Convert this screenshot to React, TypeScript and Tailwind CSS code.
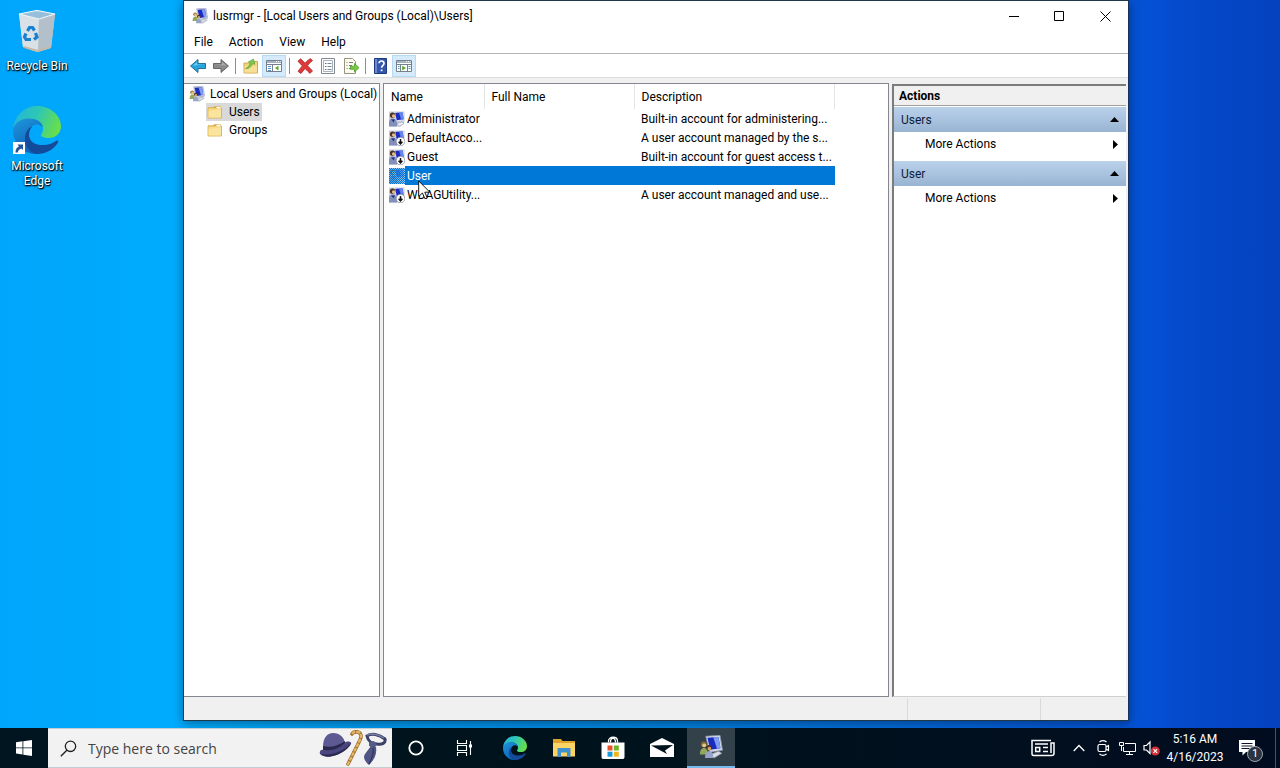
import React, { useState } from 'react';

const users = [
  { name: 'Administrator', fullName: '', description: 'Built-in account for administering...', disabled: false },
  { name: 'DefaultAcco...', fullName: '', description: 'A user account managed by the s...', disabled: true },
  { name: 'Guest', fullName: '', description: 'Built-in account for guest access t...', disabled: true },
  { name: 'User', fullName: '', description: '', disabled: false },
  { name: 'WDAGUtility...', fullName: '', description: 'A user account managed and use...', disabled: true },
];

const menus = ['File', 'Action', 'View', 'Help'];

/* ---------- small icons ---------- */

const UsersPcIcon = ({ className = 'w-4 h-4' }: { className?: string }) => (
  <svg viewBox="0 0 16 16" className={className}>
    <path d="M4.500.8l9.500-.6 1.700 10-8.700 1.300z" fill="#d3d8e8" stroke="#8a90a8" strokeWidth=".5" />
    <path d="M5.600 1.800l7.400-.5 1.300 7.600-6.800 1z" fill="#1a2cc0" />
    <path d="M9.500 1.500l3.500-.2 1.300 7.600-2.300.3z" fill="#7f9cf2" />
    <path d="M7.500 13l5.500-2.200 2.200 1.400-5.200 3.200z" fill="#d7dce6" stroke="#8b93a5" strokeWidth=".5" />
    <circle cx="3.200" cy="6.300" r="1.900" fill="#8a6a34" />
    <circle cx="3.500" cy="6.900" r="1.300" fill="#eac68c" />
    <path d="M.6 13c0-3 1.200-4.400 2.700-4.400S6 10 6 13z" fill="#93a85c" />
    <circle cx="6.700" cy="8.500" r="1.800" fill="#4b3420" />
    <circle cx="6.900" cy="9.100" r="1.200" fill="#d9a566" />
    <path d="M4 15.300c0-3 1.200-4.400 2.800-4.400s2.700 1.400 2.700 4.400z" fill="#97a4c8" />
  </svg>
);

const UserIcon = ({ disabled, selected }: { disabled?: boolean; selected?: boolean }) => (
  <svg viewBox="0 0 16 16" className="w-4 h-4">
    <defs>
      <pattern id="dither" width="2" height="2" patternUnits="userSpaceOnUse">
        <path d="M0 0h1v1H0zM1 1h1v1H1z" fill="#0078d7" />
      </pattern>
    </defs>
    <path d="M0 .5h15.500V11l-4 4.500H0z" fill="#c9ccdc" />
    <path d="M5.500 1l9-.4 1 8.700-8 1z" fill="#e1e4f0" />
    <path d="M6.300 1.800l7.500-.4.8 6.900-6.900.9z" fill="#1a2dc0" />
    <path d="M10 1.600l3.800-.2.8 6.900-2.600.3z" fill="#6484ec" />
    <circle cx="3.600" cy="4.200" r="2.700" fill="#4a3222" />
    <circle cx="4.600" cy="5" r="1.700" fill="#e6bc8c" />
    <path d="M0 15.500V11c0-2 1.700-3.500 3.700-3.500S8 9 8 12v3.500z" fill="#8290bb" />
    <path d="M2 8.500l2.800 3 1-3.200z" fill="#26367c" />
    <path d="M8 12.200l5-1.200 2 1.500-5 3z" fill="#eef0f5" stroke="#8088a0" strokeWidth=".5" />
    {disabled && (
      <g>
        <circle cx="11.500" cy="11.500" r="4.300" fill="#fff" stroke="#6d7488" strokeWidth=".6" />
        <path d="M11.500 9v4.600M9.600 11.800l1.900 2 1.900-2" fill="none" stroke="#111" strokeWidth="1.500" />
      </g>
    )}
    {selected && (
      <g>
        <rect width="16" height="16" fill="#4fa3e6" opacity=".55" />
        <rect width="16" height="16" fill="url(#dither)" />
      </g>
    )}
  </svg>
);

const FolderIcon = () => (
  <svg viewBox="0 0 16 16" className="w-4 h-4">
    <path d="M1 3.500h5l1.200-1.300h6.600V5H1z" fill="#dca842" />
    <path d="M1 4h13.500v10H1z" fill="#f8dc88" stroke="#d9ab4b" strokeWidth=".8" />
    <path d="M9.500 2.800h4v1.600h-4z" fill="#fff" />
    <path d="M1.600 7l12.400-1.500v8H1.600z" fill="#fbe49d" />
  </svg>
);

const ArrowIcon = ({ right }: { right?: boolean }) =>
  right ? (
    <svg viewBox="0 0 16 16" className="w-4 h-4">
      <path d="M.5 5.500H8v-4l7.500 6.500L8 14.500v-4H.5z" fill="#8b8b8b" stroke="#5c5c5c" strokeWidth=".9" />
      <path d="M1.500 6.500H9V4l4 3.500z" fill="#adadad" />
    </svg>
  ) : (
    <svg viewBox="0 0 16 16" className="w-4 h-4">
      <path d="M15.500 5.500H8v-4L.5 8 8 14.500v-4h7.500z" fill="#27a5dc" stroke="#17668f" strokeWidth=".9" />
      <path d="M14.500 6.500H7V4L3 7.500z" fill="#6fd0f3" />
    </svg>
  );

const UpFolderIcon = () => (
  <svg viewBox="0 0 16 16" className="w-4 h-4">
    <path d="M1 5h6l1-1.500h6.500V15H1z" fill="#f3d57c" stroke="#c9a349" strokeWidth=".9" />
    <path d="M1.500 8h12.500v6.500H1.500z" fill="#f7df95" />
    <path d="M2.500 10.500C5 9.500 6.500 7.500 7.500 4.800L5.300 4 10.500 1l1.300 5.300-2-.7C8.500 8.500 6 11 2.500 10.500z" fill="#7fc94e" stroke="#4f9a2c" strokeWidth=".6" />
  </svg>
);

const PaneIcon = ({ side }: { side: 'left' | 'right' }) => (
  <svg viewBox="0 0 16 16" className="w-4 h-4">
    <path d="M.5 2.500h15v11H.5z" fill="#fff" stroke="#75808c" />
    <path d="M1 3h14v2H1z" fill="#a3b3c2" />
    <path d="M10 3.500h1M12 3.500h1M14 3.500h.6" stroke="#fff" />
    <path d="M1 6.500h14" stroke="#75808c" />
    {side === 'left' ? (
      <g>
        <path d="M6.500 7v6.500" stroke="#75808c" />
        <path d="M2 8.500h3M2 10.500h3M2 12.500h3" stroke="#5a91c6" />
        <path d="M12.500 7.800v4.600L9 10.100z" fill="#55a630" />
      </g>
    ) : (
      <g>
        <path d="M4.500 7v6.500M11.500 7v6.500" stroke="#75808c" />
        <path d="M2 8.500h1.500M2 10.500h1.500M12.500 8.500h2M12.500 10.500h2" stroke="#5a91c6" />
        <path d="M6.200 7.800v4.600L10 10.100z" fill="#55a630" />
      </g>
    )}
  </svg>
);

const DeleteIcon = () => (
  <svg viewBox="0 0 16 16" className="w-4 h-4">
    <path d="M1 3.200L3.500.8C5 2 6.600 3.600 8 5.200 9.600 3.400 11.500 1.600 13.500.6l2 2c-2 1.400-3.700 3.300-5 5.100 1.700 1.700 3.500 3.500 5 5.200L13 15.400c-1.600-1.400-3.400-3.200-5-4.900-1.300 1.600-2.700 3.400-4 5L1 13.400c1.200-1.800 2.700-3.800 4.300-5.500C3.800 6.300 2.200 4.600 1 3.200z" fill="#e0393a" stroke="#a51d1f" strokeWidth=".7" />
  </svg>
);

const PropertiesIcon = () => (
  <svg viewBox="0 0 16 16" className="w-4 h-4">
    <path d="M1.500.5h13v15h-13z" fill="#fbfbfb" stroke="#828b94" />
    <path d="M3.500 2.500h9v11h-9z" fill="#fff" stroke="#a9b2bb" />
    <path d="M5 5.500h1.500M5 8.500h1.500M5 11.500h1.500" stroke="#3d7ab8" />
    <path d="M7.500 5.500h4M7.500 8.500h4M7.500 11.500h4" stroke="#7b8792" />
  </svg>
);

const ExportIcon = () => (
  <svg viewBox="0 0 16 16" className="w-4 h-4">
    <path d="M1.500.5h8l3 3v12h-11z" fill="#fdfbee" stroke="#97937d" />
    <path d="M3.500 4.500h1M3.500 7.500h1M3.500 10.500h1M6 4.500h4M6 7.500h3M6 10.500h2" stroke="#77808c" />
    <path d="M7.500 8.200h4V5.500L16 9.700l-4.500 4.300v-2.700h-4z" fill="#78cc3f" stroke="#3f9423" strokeWidth=".7" />
  </svg>
);

const HelpIcon = () => (
  <svg viewBox="0 0 16 16" className="w-4 h-4">
    <path d="M1.500.5h12v15h-12z" fill="#3457ad" stroke="#20397c" />
    <path d="M2 1h2v14H2z" fill="#6c8bd2" />
    <path d="M6 5.300c0-3 5-3 5 .2 0 2-2.400 1.800-2.400 4.300" fill="none" stroke="#fff" strokeWidth="1.600" />
    <path d="M7.700 11.500h1.800v1.700H7.700z" fill="#fff" />
  </svg>
);

const EdgeIcon = ({ className, id }: { className: string; id: string }) => (
  <svg viewBox="0 0 48 48" className={className}>
    <defs>
      <linearGradient id={id + 'a'} x1="0" y1=".3" x2="1" y2=".6">
        <stop offset="0" stopColor="#22b5dc" />
        <stop offset=".45" stopColor="#2ec7b4" />
        <stop offset="1" stopColor="#6be044" />
      </linearGradient>
      <linearGradient id={id + 'b'} x1="0" y1="0" x2=".5" y2="1">
        <stop offset="0" stopColor="#1f97dc" />
        <stop offset="1" stopColor="#0c62b8" />
      </linearGradient>
    </defs>
    <path d="M0 24C1 10 11 0 24 0c14 0 24 10 24 20 0 8-6 12-12 12-5 0-8-1-8-3 0-1 2-3 2-6 0-6-6-10-13-10C9 13 2 17 0 24z" fill={`url(#${id}a)`} />
    <path d="M0 24c1-7 8-11.500 16-11.500 7 0 13 3 14 9-3-3.500-8-4-11-1-6 6-4 19 8 26-2 1-3 1.500-5 1.500C9 47 0 37 0 24z" fill={`url(#${id}b)`} />
    <path d="M19 20.500c-6 8-3 19 11 18.500 6 0 10-2 13-4 1.500-1 3 0 2 1.500C40 44 33 48 24 48c-9-2-13-10-12-17 .6-5 3-9 7-10.500z" fill="#134a99" />
  </svg>
);

const RecycleBinIcon = () => (
  <svg viewBox="0 0 40 44" className="w-10 h-11">
    <path d="M2 4l20 5 16-5-4 34-14 4L6 37z" fill="#cfd6db" />
    <path d="M2 4l20 5-1 33L6 37z" fill="#d9e1e7" />
    <path d="M22 9l16-5-4 34-13 4z" fill="#b3bfc9" />
    <path d="M7 36l14 4 12-4v2l-12 4-14-4z" fill="#c9b6a5" />
    <path d="M2 4L20 .5 38 4 22 9z" fill="#97bfdc" stroke="#f1f5f8" strokeWidth="1.200" />
    <g fill="none" stroke="#1780d0" strokeWidth="3.200">
      <path d="M10.500 21l2-3.500h3l2 3" />
      <path d="M18.500 23l1.500 4-3 2.500" />
      <path d="M14 29.500H9L7.500 27l1.500-3.500" />
    </g>
  </svg>
);

const BowlerHatArt = () => (
  <svg viewBox="0 0 68 38" className="w-[68px] h-[38px]">
    <g fill="none" strokeLinecap="round">
      <path d="M29 35L41 11c2-4 1-7-2-8-3-.5-5 0-6 2" stroke="#9b6a2c" strokeWidth="3.600" />
      <path d="M29 35L41 11c2-4 1-7-2-8-3-.5-5 0-6 2" stroke="#e2b565" strokeWidth="2.400" strokeDasharray="2 3" />
    </g>
    <path d="M4 18C4 9 8 4 14 4c7 0 11 4 12 11l-22 8z" fill="#5d5992" />
    <path d="M4 17c7 2 15 0 22-5l1 5c-7 5-15 7-23 5z" fill="#29274d" />
    <path d="M1 25c-1-4 2-5 5-4 8 1 15-2 21-8 3-1 6 0 5 2-5 9-24 17-31 10z" fill="#4a4680" />
    <path d="M2 25c10 2 22-2 30-11-4 10-23 18-30 11z" fill="#2b294f" />
    {/* necktie: a loop round the collar, knot and a tail */}
    <path d="M48 7c4-3 12-2 18 3 1 4-3 6-8 5-5 0-9-3-10-8z" fill="none" stroke="#3c4066" strokeWidth="3" />
    <path d="M48 6c4-2 11-1 17 3" fill="none" stroke="#7a7fa8" strokeWidth="1.500" />
    <path d="M50 13l5-1 3 4-3 3-5-2z" fill="#565b8c" />
    <path d="M52 17l5 1c1 7-1 12-7 18-5-4-6-8-4-11z" fill="#4e5484" />
    <path d="M54 19c1 5-1 10-4 16" stroke="#272a4b" fill="none" />
  </svg>
);

/* ---------- window ---------- */

const ToolButton = ({ label, active, children }: { label: string; active?: boolean; children: React.ReactNode }) => (
  <button
    aria-label={label}
    className={`flex h-[22px] shrink-0 items-center justify-center ${
      active ? 'w-6 border border-[#b5daf5] bg-[#d5ebfb]' : 'w-[23px]'
    }`}
  >
    {children}
  </button>
);

const Separator = () => <div className="mx-[3px] h-4 w-px bg-[#8d8d8d]" />;

const ActionSection = ({ title }: { title: string }) => (
  <section className="pb-[5px]">
    <button className="flex h-[25px] w-full items-center justify-between bg-linear-to-b from-[#bbd1ec] to-[#98b4d2] pr-[7px] pl-[7px] text-[#0b1c38]">
      <span>{title}</span>
      <svg viewBox="0 0 9 5" className="w-[9px] h-[5px]">
        <path d="M4.500 0L9 5H0z" fill="#000" />
      </svg>
    </button>
    <button className="flex h-6 w-full items-center justify-between pr-2 pl-[31px]">
      <span>More Actions</span>
      <svg viewBox="0 0 5 9" className="w-[5px] h-[9px]">
        <path d="M0 0l5 4.500L0 9z" fill="#000" />
      </svg>
    </button>
  </section>
);

const ConsoleWindow: React.FC = () => {
  const [selected, setSelected] = useState('User');

  return (
    <main className="absolute top-0 right-[151px] bottom-[47px] left-[183px] flex flex-col border border-[#20394a] border-r-[#16325f] bg-[#f0f0f0] shadow-[0_2px_10px_rgba(0,0,0,0.4)]">
      {/* Title bar */}
      <header className="flex h-[30px] shrink-0 items-center bg-white pl-2">
        <UsersPcIcon />
        <h1 className="ml-[5px] flex-1">lusrmgr - [Local Users and Groups (Local)\Users]</h1>
        <div className="flex h-full">
          <button aria-label="Minimize" className="flex w-[45px] items-center justify-center">
            <svg viewBox="0 0 11 11" className="w-[11px] h-[11px]">
              <path d="M0 5.500h10" stroke="#000" />
            </svg>
          </button>
          <button aria-label="Maximize" className="flex w-[45px] items-center justify-center">
            <svg viewBox="0 0 11 11" className="w-[11px] h-[11px]">
              <path d="M.5.5h9v9h-9z" fill="none" stroke="#000" />
            </svg>
          </button>
          <button aria-label="Close" className="flex w-[46px] items-center justify-center">
            <svg viewBox="0 0 11 11" className="w-[11px] h-[11px]">
              <path d="M.5.5l10 10M10.500.5l-10 10" stroke="#000" />
            </svg>
          </button>
        </div>
      </header>

      {/* Menu bar */}
      <nav className="flex h-[23px] shrink-0 items-center border-b border-[#b4b4b4] bg-white pl-[2px]">
        {menus.map(menu => (
          <button key={menu} className="px-2">
            {menu}
          </button>
        ))}
      </nav>

      {/* Toolbar */}
      <div className="flex h-6 shrink-0 items-end border-b border-[#dcdcdc] bg-white pl-[2px]">
        <div className="flex items-center">
          <ToolButton label="Back"><ArrowIcon /></ToolButton>
          <ToolButton label="Forward"><ArrowIcon right /></ToolButton>
          <Separator />
          <ToolButton label="Up one level"><UpFolderIcon /></ToolButton>
          <ToolButton label="Show/Hide console tree" active><PaneIcon side="left" /></ToolButton>
          <Separator />
          <ToolButton label="Delete"><DeleteIcon /></ToolButton>
          <ToolButton label="Properties"><PropertiesIcon /></ToolButton>
          <ToolButton label="Export list"><ExportIcon /></ToolButton>
          <Separator />
          <ToolButton label="Help"><HelpIcon /></ToolButton>
          <ToolButton label="Show/Hide action pane" active><PaneIcon side="right" /></ToolButton>
        </div>
      </div>

      <div className="flex min-h-0 flex-1 pt-[5px] pr-[2px]">
        {/* Console tree */}
        <aside className="w-[196px] shrink-0 border border-l-0 border-[#828790] bg-white pt-px pl-[5px]">
          <button className="flex h-[18px] items-center gap-[5px] whitespace-nowrap">
            <UsersPcIcon />
            <span>Local Users and Groups (Local)</span>
          </button>
          <button className="ml-[17px] flex h-[18px] items-center gap-[6px] bg-[#d9d9d9] pr-[2px] pl-px">
            <FolderIcon />
            <span>Users</span>
          </button>
          <button className="ml-[17px] flex h-[18px] items-center gap-[6px] pr-[2px] pl-px">
            <FolderIcon />
            <span>Groups</span>
          </button>
        </aside>

        {/* User list */}
        <section className="ml-[3px] min-w-0 flex-1 border border-[#828790] bg-white">
          <table className="w-[451px] table-fixed border-collapse">
            <thead>
              <tr className="h-[25px] text-left">
                <th className="w-[100px] border-r border-[#e5e5e5] pl-[7px] font-normal">Name</th>
                <th className="w-[150px] border-r border-[#e5e5e5] pl-[7px] font-normal">Full Name</th>
                <th className="border-r border-[#e5e5e5] pl-[7px] font-normal">Description</th>
              </tr>
            </thead>
            <tbody>
              {users.map(user => {
                const isSelected = user.name === selected;
                const cell = isSelected ? 'bg-[#0078d7] text-white' : '';
                return (
                  <tr key={user.name} onClick={() => setSelected(user.name)} className="h-[19px]">
                    <td className="p-0">
                      <div className="flex h-[19px] items-center pl-[5px]">
                        <UserIcon disabled={user.disabled} selected={isSelected} />
                        <span className={`h-full flex-1 pl-[2px] leading-[21px] whitespace-nowrap ${cell}`}>{user.name}</span>
                      </div>
                    </td>
                    <td className={`p-0 ${cell}`}>{user.fullName}</td>
                    <td className={`p-0 pl-[7px] ${cell}`}>
                      <div className="h-[19px] leading-[21px] whitespace-nowrap">{user.description}</div>
                    </td>
                  </tr>
                );
              })}
            </tbody>
          </table>
        </section>

        {/* Actions pane */}
        <aside className="mt-px ml-[3px] w-[234px] shrink-0 border-t-2 border-b border-l-2 border-[#7b7b7b] border-b-[#d0d0d0] bg-white">
          <h2 className="mb-px flex h-5 items-center border-b border-[#a0a0a0] bg-[#f0f0f0] pl-[5px] font-bold">Actions</h2>
          <ActionSection title="Users" />
          <ActionSection title="User" />
        </aside>
      </div>

      {/* Status bar */}
      <footer className="flex h-[23px] shrink-0 justify-end pt-px">
        <div className="w-[133px] border-l border-[#dadada]"></div>
        <div className="w-[88px] border-l border-[#dadada]"></div>
      </footer>
    </main>
  );
};

/* ---------- taskbar ---------- */

const TaskButton = ({ label, active, children }: { label: string; active?: boolean; children: React.ReactNode }) => (
  <button
    aria-label={label}
    className={`flex h-10 w-12 items-center justify-center ${active ? 'border-b-2 border-[#76b9ed] bg-[#33414b]' : ''}`}
  >
    {children}
  </button>
);

const Taskbar: React.FC = () => (
  <footer className="absolute inset-x-0 bottom-0 flex h-10 items-center bg-linear-to-r from-[#00151f] via-[#00131c] to-[#020c20]">
    <TaskButton label="Start">
      <svg viewBox="0 0 16 16" className="w-4 h-4">
        <path d="M0 2.200l6.500-.9v6.200H0zM7.300 1.200L16 0v7.500H7.300zM0 8.300h6.500v6.200L0 13.600zM7.300 8.300H16V16l-8.700-1.200z" fill="#fff" />
      </svg>
    </TaskButton>

    <label className="flex h-10 w-[344px] items-center border-y border-[#c4cdd1] bg-[#f2f2f2] pr-[5px] pl-3">
      <svg viewBox="0 0 17 17" className="w-[17px] h-[17px] shrink-0">
        <circle cx="10.500" cy="6.300" r="5.200" fill="none" stroke="#222" strokeWidth="1.300" />
        <path d="M6.800 10.200L.8 16.200" stroke="#222" strokeWidth="1.400" />
      </svg>
      <input
        type="text"
        aria-label="Search"
        placeholder="Type here to search"
        className="ml-[11px] min-w-0 flex-1 bg-transparent font-['Open_Sans','Noto_Sans',sans-serif] text-[14px] outline-none placeholder:text-[#444]"
      />
      <BowlerHatArt />
    </label>

    <TaskButton label="Cortana">
      <svg viewBox="0 0 16 16" className="w-4 h-4">
        <circle cx="8" cy="8" r="6.700" fill="none" stroke="#fff" strokeWidth="1.800" />
      </svg>
    </TaskButton>
    <TaskButton label="Task View">
      <svg viewBox="0 0 17 16" className="w-[17px] h-4" fill="none" stroke="#fff">
        <path d="M1.500 0v3.500h9V0M1.500 16v-3.500h9V16M1.500 5.500h9v5h-9zM14.500 1v14" strokeWidth="1.100" />
        <path d="M13 4.500h3v3h-3z" fill="#fff" stroke="none" />
      </svg>
    </TaskButton>

    <div className="ml-[3px] flex gap-px">
      <TaskButton label="Microsoft Edge"><EdgeIcon id="edgeTask" className="w-6 h-6" /></TaskButton>
      <TaskButton label="File Explorer">
        <svg viewBox="0 0 22 20" className="w-[22px] h-5">
          <path d="M0 1h8l1.500 2H22v4H0z" fill="#dfa22c" />
          <path d="M0 5h22v13.500H0z" fill="#fcd465" />
          <path d="M4.500 10h13v9h-3.500v-4.500H8V19H4.500z" fill="#3f92cf" />
        </svg>
      </TaskButton>
      <TaskButton label="Microsoft Store">
        <svg viewBox="0 0 24 24" className="w-6 h-6">
          <path d="M7.500 6.500V5c0-5 9-5 9 0v1.500M9.500 6.500C9 1 14.500 1 14.500 6.500" fill="none" stroke="#fff" strokeWidth="1.300" />
          <path d="M.5 6.500h23V21c0 1.500-1 2-2 2h-19c-1 0-2-.5-2-2z" fill="#fff" />
          <path d="M6.500 9.500h5v5h-5z" fill="#e8502b" />
          <path d="M12.800 9.500h5v5h-5z" fill="#6fb52c" />
          <path d="M6.500 15.700h5v5h-5z" fill="#189bd8" />
          <path d="M12.800 15.700h5v5h-5z" fill="#f1b51c" />
        </svg>
      </TaskButton>
      <TaskButton label="Mail">
        <svg viewBox="0 0 24 20" className="w-6 h-5">
          <path d="M0 6l12-6 12 6v13H0z" fill="#fff" />
          <path d="M1 7.500l22-.5-8 5.500 2 3.500z" fill="#00131c" />
        </svg>
      </TaskButton>
      <TaskButton label="Local Users and Groups" active><UsersPcIcon className="w-6 h-6" /></TaskButton>
    </div>

    {/* Tray */}
    <div className="ml-auto flex h-full items-center text-white">
      <button aria-label="News" className="flex w-12 justify-center">
        <svg viewBox="0 0 24 18" className="w-6 h-[18px]" fill="none" stroke="#fff" strokeWidth="1.500">
          <path d="M20 1.500H1v13.500c0 1 .6 1.500 1.500 1.500h18c1.500 0 2.500-.6 2.500-2V4h-3v10" />
          <path d="M4 5h13M12 8.500h5M12 12.500h5" />
          <path d="M4.700 8.500h4v4h-4z" />
        </svg>
      </button>
      <button aria-label="Show hidden icons" className="flex w-6 justify-center">
        <svg viewBox="0 0 12 8" className="w-3 h-2">
          <path d="M.7 7L6 1.500 11.300 7" fill="none" stroke="#fff" strokeWidth="1.300" />
        </svg>
      </button>
      <button aria-label="Meet Now" className="flex w-6 justify-center">
        <svg viewBox="0 0 16 16" className="w-4 h-4" fill="none" stroke="#fff" strokeWidth="1.200">
          <path d="M4.500 4.500h5c1 0 1.500.5 1.500 1.500v4c0 1-.5 1.500-1.500 1.500h-5c-1 0-1.500-.5-1.500-1.500V6c0-1 .5-1.500 1.500-1.500zM11 7l2.500-1.500v5L11 9M4.500 2c2-1.500 5-1.500 7 0M4.500 14c2 1.500 5 1.500 7 0" />
        </svg>
      </button>
      <button aria-label="Network" className="flex w-6 justify-center">
        <svg viewBox="0 0 17 15" className="w-[17px] h-[15px]" fill="none" stroke="#fff">
          <path d="M6 2.500h10.500v8H4.500V6M10.500 10.500v3M7 13.500h7M.5 1.500h4v3h-4zM2.500 5v5" />
        </svg>
      </button>
      <button aria-label="Volume muted" className="flex w-6 justify-center">
        <svg viewBox="0 0 17 16" className="w-[17px] h-4">
          <path d="M1 5.500h2.500L7 2v11.500L3.500 10H1z" fill="none" stroke="#fff" strokeWidth="1.200" />
          <circle cx="12.300" cy="11" r="4.500" fill="#d32f37" />
          <path d="M10.500 9.200l3.600 3.600M14.100 9.200l-3.600 3.600" stroke="#fff" strokeWidth="1.200" />
        </svg>
      </button>
      <button className="w-16 text-center leading-[18px]">
        <span className="block">5:16 AM</span>
        <span className="block">4/16/2023</span>
      </button>
      <button aria-label="Notifications" className="relative flex w-12 justify-center pr-2">
        <svg viewBox="0 0 16 16" className="w-4 h-4">
          <path d="M0 0h16v12H7l-3.500 3.500V12H0z" fill="#fff" />
          <path d="M2.500 3.500h11M2.500 6h11M2.500 8.500h8" stroke="#07162a" />
        </svg>
        <span className="absolute top-[6px] left-5 h-4 w-4 rounded-full border border-[#9aa3ad] bg-[#2b3440] text-[11px] leading-[14px]">1</span>
      </button>
      <button aria-label="Show desktop" className="h-full w-[5px] border-l border-[#46525e]"></button>
    </div>
  </footer>
);

/* ---------- desktop ---------- */

const DesktopIcon = ({ label, children }: { label: string; children: React.ReactNode }) => (
  <button className="flex w-[74px] flex-col items-center text-center leading-[15px] text-white [text-shadow:0_1px_2px_#000,1px_1px_1px_#000]">
    {children}
    <span className="mt-[5px]">{label}</span>
  </button>
);

const App: React.FC = () => (
  <div className="relative h-screen overflow-hidden bg-[linear-gradient(90deg,#00a6fb_0%,#00abfd_14%,#0084e0_50%,#0450d4_90%,#0448c8_94%,#0442be_100%)] font-[Roboto,'Open_Sans',sans-serif] text-[12px] text-black select-none">
    <div className="flex flex-col gap-8 pt-[10px]">
      <DesktopIcon label="Recycle Bin"><RecycleBinIcon /></DesktopIcon>
      <DesktopIcon label="Microsoft Edge">
        <span className="relative">
          <EdgeIcon id="edgeDesk" className="w-12 h-12" />
          <svg viewBox="0 0 12 12" className="absolute bottom-0 left-0 h-3 w-3">
            <path d="M0 0h12v12H0z" fill="#fff" />
            <path d="M2.500 10.500c0-3 1-5 3.500-6L4.500 2.500H10V8L8.300 6.500C6 7.500 5 8.500 4.800 10.500z" fill="#23549c" />
          </svg>
        </span>
      </DesktopIcon>
    </div>

    <ConsoleWindow />
    <Taskbar />

    {/* Mouse pointer */}
    <svg viewBox="0 0 13 20" className="pointer-events-none absolute top-[180px] left-[418px] h-5 w-[13px]">
      <path d="M.7.9v15.600l3.700-3.500 2.500 5.700 2.300-1-2.400-5.500h5z" fill="#fff" stroke="#000" strokeWidth=".9" />
    </svg>
  </div>
);

export default App;
